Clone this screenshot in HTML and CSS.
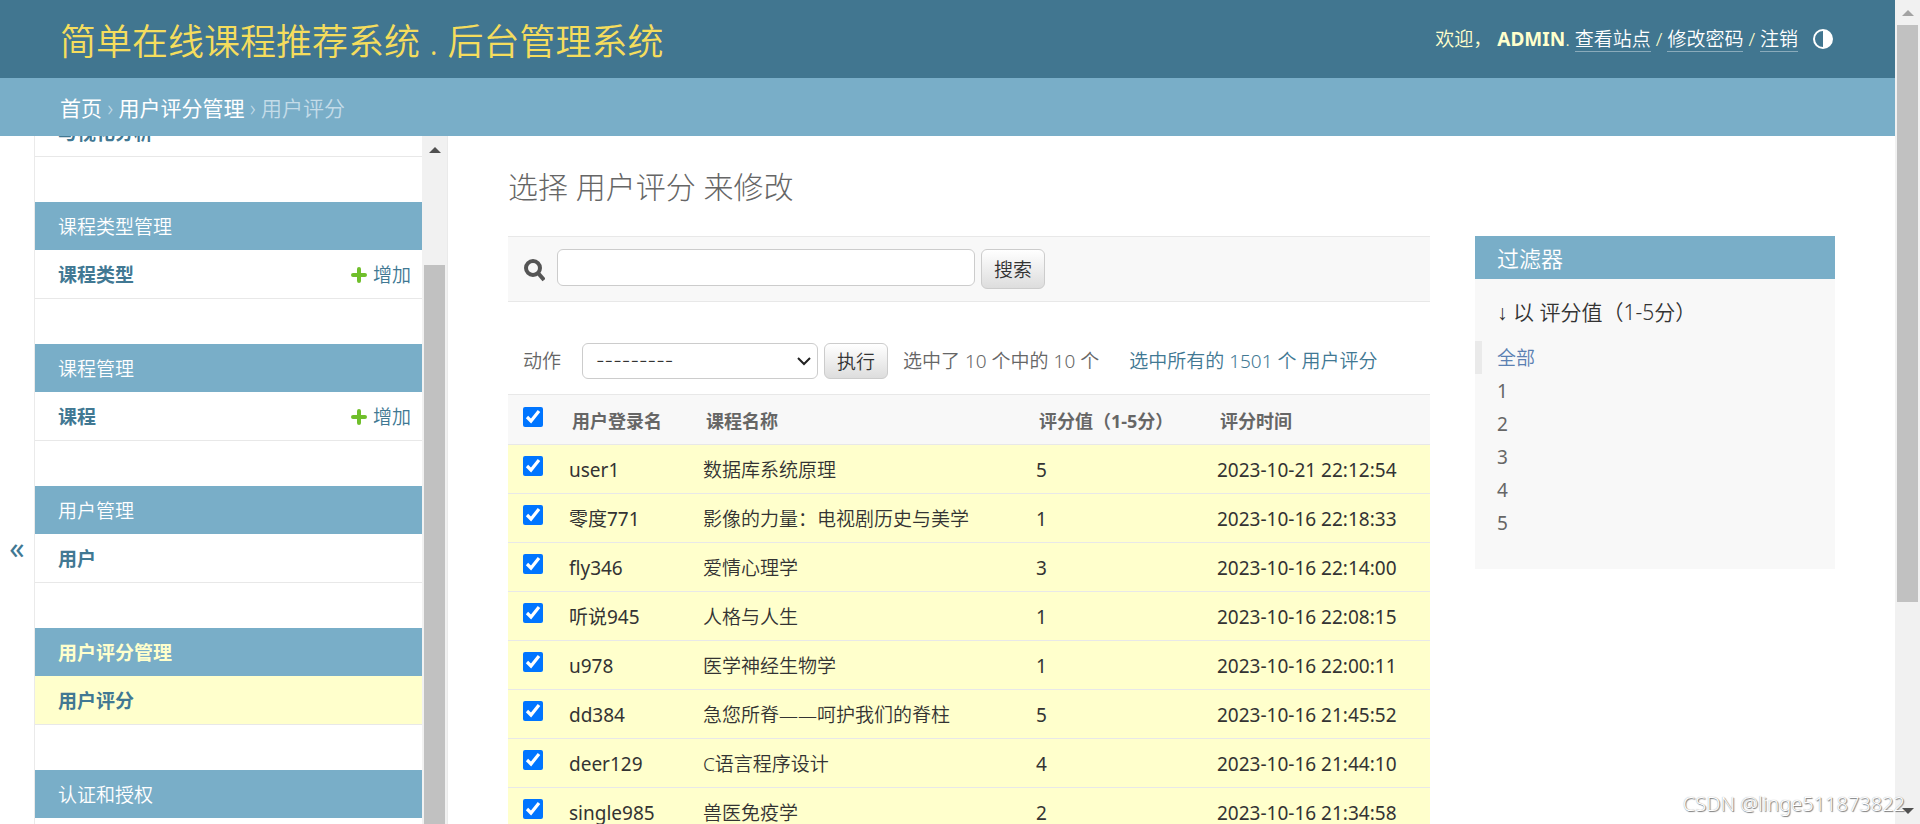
FILE: index.html
```html
<!DOCTYPE html>
<html lang="zh-CN">
<head>
<meta charset="utf-8">
<title>选择 用户评分 来修改</title>
<link rel="stylesheet" href="styles.css">
</head>
<body>
<div class="window">
  <div class="page">
    <header class="header">
      <h1 class="brand"><a href="#">简单在线课程推荐系统 . 后台管理系统</a></h1>
      <div class="user-tools">
        <span>欢迎，</span>
        <span><strong>ADMIN</strong>.</span>
        <a href="#">查看站点</a> <span>/</span>
        <a href="#">修改密码</a> <span>/</span>
        <a href="#">注销</a>
        <button class="theme-toggle" type="button" aria-label="切换主题">
          <svg viewBox="0 0 20 20" width="20" height="20"><circle cx="10" cy="10" r="9" fill="none" stroke="#fff" stroke-width="2"/><path d="M10 1a9 9 0 0 1 0 18z" fill="#fff"/></svg>
        </button>
      </div>
    </header>
    <nav class="breadcrumbs"><a href="#">首页</a> › <a href="#">用户评分管理</a> › 用户评分</nav>
    <div class="main">
      <button class="nav-toggle" type="button" aria-label="切换导航">«</button>
      <aside class="sidebar">
        <div class="modules">
          <section class="module">
            <div class="model"><a class="model-name" href="#">与视化分析</a></div>
          </section>
          <section class="module">
            <h2 class="caption"><a href="#">课程类型管理</a></h2>
            <div class="model"><a class="model-name" href="#">课程类型</a><a class="add" href="#"><svg viewBox="0 0 16 16" width="16" height="16"><path d="M8 2v12M2 8h12" stroke="#70bf2b" stroke-width="4" stroke-linecap="round"/></svg>增加</a></div>
          </section>
          <section class="module">
            <h2 class="caption"><a href="#">课程管理</a></h2>
            <div class="model"><a class="model-name" href="#">课程</a><a class="add" href="#"><svg viewBox="0 0 16 16" width="16" height="16"><path d="M8 2v12M2 8h12" stroke="#70bf2b" stroke-width="4" stroke-linecap="round"/></svg>增加</a></div>
          </section>
          <section class="module">
            <h2 class="caption"><a href="#">用户管理</a></h2>
            <div class="model"><a class="model-name" href="#">用户</a></div>
          </section>
          <section class="module current">
            <h2 class="caption"><a href="#">用户评分管理</a></h2>
            <div class="model"><a class="model-name" href="#">用户评分</a></div>
          </section>
          <section class="module">
            <h2 class="caption"><a href="#">认证和授权</a></h2>
            <div class="model"></div>
          </section>
        </div>
        <div class="scrollbar side-scroll" aria-hidden="true"><span class="arrow up"></span><span class="thumb"></span></div>
      </aside>
      <main class="content">
        <h1 class="title">选择 用户评分 来修改</h1>
        <div class="changelist">
          <div class="results">
            <form class="toolbar">
              <label class="search-label" for="q" aria-label="搜索"><svg viewBox="0 0 22 24" width="22" height="24" fill="none" stroke="#555"><circle cx="10" cy="9" r="7" stroke-width="4"/><path d="M15 14l6 7" stroke-width="4"/></svg></label>
              <input class="search" id="q" type="text">
              <button class="button" type="button">搜索</button>
            </form>
            <div class="actions">
              <label class="action-label" for="action">动作</label>
              <div class="select-wrap">
                <select class="action" id="action"><option>---------</option></select>
                <svg class="chevron" viewBox="0 0 14 10" width="14" height="10"><path d="M1 2l6 6 6-6" fill="none" stroke="#222" stroke-width="2"/></svg>
              </div>
              <button class="button" type="button">执行</button>
              <span class="counter">选中了 10 个中的 10 个</span>
              <a class="all" href="#">选中所有的 1501 个 用户评分</a>
            </div>
            <table class="list">
              <colgroup><col class="c-check"><col class="c-user"><col class="c-course"><col class="c-score"><col></colgroup>
              <thead><tr><th><input type="checkbox" checked aria-label="全选"></th><th>用户登录名</th><th>课程名称</th><th>评分值（1-5分）</th><th>评分时间</th></tr></thead>
              <tbody>
                <tr><td><input type="checkbox" checked aria-label="user1"></td><td>user1</td><td class="course">数据库系统原理</td><td>5</td><td>2023-10-21 22:12:54</td></tr>
                <tr><td><input type="checkbox" checked aria-label="零度771"></td><td>零度771</td><td class="course">影像的力量：电视剧历史与美学</td><td>1</td><td>2023-10-16 22:18:33</td></tr>
                <tr><td><input type="checkbox" checked aria-label="fly346"></td><td>fly346</td><td class="course">爱情心理学</td><td>3</td><td>2023-10-16 22:14:00</td></tr>
                <tr><td><input type="checkbox" checked aria-label="听说945"></td><td>听说945</td><td class="course">人格与人生</td><td>1</td><td>2023-10-16 22:08:15</td></tr>
                <tr><td><input type="checkbox" checked aria-label="u978"></td><td>u978</td><td class="course">医学神经生物学</td><td>1</td><td>2023-10-16 22:00:11</td></tr>
                <tr><td><input type="checkbox" checked aria-label="dd384"></td><td>dd384</td><td class="course">急您所脊——呵护我们的脊柱</td><td>5</td><td>2023-10-16 21:45:52</td></tr>
                <tr><td><input type="checkbox" checked aria-label="deer129"></td><td>deer129</td><td class="course">C语言程序设计</td><td>4</td><td>2023-10-16 21:44:10</td></tr>
                <tr><td><input type="checkbox" checked aria-label="single985"></td><td>single985</td><td class="course">兽医免疫学</td><td>2</td><td>2023-10-16 21:34:58</td></tr>
              </tbody>
            </table>
          </div>
          <aside class="filter">
            <h2 class="filter-title">过滤器</h2>
            <h3 class="filter-by"><span class="down">↓</span> 以 评分值（1-5分）</h3>
            <ul class="filter-list">
              <li class="selected"><a href="#">全部</a></li>
              <li><a href="#">1</a></li>
              <li><a href="#">2</a></li>
              <li><a href="#">3</a></li>
              <li><a href="#">4</a></li>
              <li><a href="#">5</a></li>
            </ul>
          </aside>
        </div>
      </main>
    </div>
  </div>
  <div class="scrollbar page-scroll" aria-hidden="true"><span class="arrow up"></span><span class="thumb"></span><span class="arrow down-arrow"></span></div>
  <div class="watermark">CSDN @linge511873822</div>
</div>
</body>
</html>
```
FILE: styles.css
```css
* { box-sizing: border-box; }

body {
  margin: 0;
  background: #fff;
  color: #333;
  font: 350 19px/24px "Noto Sans", "Noto Sans CJK SC", sans-serif;
}

h1, h2, h3, ul { margin: 0; padding: 0; font-weight: 350; }
ul { list-style: none; }
a { color: #417893; text-decoration: none; }
svg { display: block; flex: none; }
button, input, select { font: inherit; color: inherit; margin: 0; }

.window { position: relative; display: flex; height: 100vh; overflow: hidden; }
.page { flex: 1; min-width: 0; display: flex; flex-direction: column; }

/* Header */
.header {
  flex: none;
  display: flex;
  align-items: center;
  justify-content: space-between;
  height: 78px;
  padding: 0 62px 0 60px;
  background: #417690;
  color: #ffc;
}
.brand { padding-top: 5px; font-size: 36px; line-height: 48px; font-weight: 350; }
.brand a { color: #f5dd5d; }
.user-tools { display: flex; align-items: center; gap: 5px; line-height: 24px; }
.user-tools a { color: #fff; border-bottom: 1px solid #8aabbb; }
.theme-toggle { margin-left: 10px; padding: 0; border: 0; background: none; }

.breadcrumbs {
  flex: none;
  height: 58px;
  padding: 2px 60px 0;
  background: #79aec8;
  color: #c4dce8;
  font-size: 21px;
  line-height: 56px;
}
.breadcrumbs a { color: #fff; font-weight: 400; }

/* Sidebar */
.main { flex: 1; min-height: 0; display: flex; }
.nav-toggle {
  width: 35px;
  padding: 136px 0 0;
  border: 0;
  border-right: 1px solid #eaeaea;
  background: #fff;
  color: #417893;
  font-size: 30px;
  font-weight: 400;
}
.sidebar { flex: none; display: flex; width: 413px; border-right: 1px solid #eaeaea; overflow: hidden; }
.modules { flex: 1; margin-top: -28px; }
.module { margin-bottom: 45px; }
.caption { height: 48px; padding: 2px 23px 0; background: #79aec8; font-size: 19px; line-height: 46px; }
.caption a { color: #fff; }
.model {
  display: flex;
  align-items: center;
  justify-content: space-between;
  height: 49px;
  padding: 2px 11px 0 23px;
  border-bottom: 1px solid #e8e8e8;
}
.model-name { font-weight: 700; }
.add { display: flex; align-items: center; gap: 6px; }
.current .caption a { color: #ffc; font-weight: 700; }
.current .model { background: #ffc; }

/* Scrollbars */
.scrollbar {
  flex: none;
  display: flex;
  flex-direction: column;
  align-items: center;
  width: 25px;
  background: #f1f1f1;
}
.thumb { width: 21px; background: #c1c1c1; }
.arrow { width: 0; height: 0; border: 6px solid transparent; border-top-width: 0; }
.up { border-bottom-color: #505050; }
.page-scroll .up { margin: 10px 0 9px; border-bottom-color: #a3a3a3; }
.page-scroll .thumb { height: 70%; }
.down-arrow { margin: auto 0 10px; border-width: 6px 6px 0; border-top-color: #505050; }
.side-scroll .up { margin: 11px 0 112px; }
.side-scroll .thumb { flex: 1; }

/* Content */
.content { flex: 1; min-width: 0; padding: 29px 60px 0; }
.title { margin-bottom: 27px; color: #666; font-size: 30px; line-height: 44px; font-weight: 300; }
.changelist { display: flex; align-items: flex-start; gap: 45px; }
.results { flex: 1; min-width: 0; }
.toolbar {
  display: flex;
  align-items: flex-start;
  height: 66px;
  padding: 12px 15px;
  border: 1px solid #e8e8e8;
  border-width: 1px 0;
  background: #f8f8f8;
}
.search-label { padding: 10px 12px 0 0; }
.search { width: 418px; height: 37px; margin-right: 6px; padding: 0 8px; border: 1px solid #ccc; border-radius: 6px; background: #fff; }
.button {
  height: 40px;
  padding: 2px 12px 0;
  border: 1px solid #ccc;
  border-radius: 6px;
  background: linear-gradient(#fff, #ddd);
  color: #333;
}
.actions { display: flex; align-items: center; height: 92px; padding: 26px 15px 0; color: #666; }
.action-label { margin-right: 21px; }
.select-wrap { position: relative; margin-right: 6px; }
.action {
  display: block;
  width: 236px;
  height: 36px;
  padding: 0 13px;
  border: 1px solid #ccc;
  border-radius: 6px;
  background: #fff;
  color: #333;
  font-family: Inter, sans-serif;
  appearance: none;
}
.chevron { position: absolute; right: 7px; top: 13px; pointer-events: none; }
.actions .button { height: 36px; }
.counter { margin: 0 30px 0 15px; }

.list { width: 100%; border-collapse: collapse; table-layout: fixed; }
.c-check { width: 49px; }
.c-user { width: 134px; }
.c-course { width: 333px; }
.c-score { width: 181px; }
.list th, .list td { padding: 2px 12px 0; border-bottom: 1px solid #e8e8e8; text-align: left; white-space: nowrap; }
.list th { height: 50px; padding-left: 15px; border-top: 1px solid #e8e8e8; background: #f8f8f8; color: #666; font-size: 18px; }
.list td { height: 49px; background: #ffc; font-weight: 400; }
.list .course { font-weight: 350; }
.list td:first-child, .list th:first-child { padding: 0 0 6px 15px; }
.list input { display: block; width: 20px; height: 20px; accent-color: #0075ff; }

/* Filter */
.filter { flex: none; width: 360px; padding-bottom: 30px; background: #f8f8f8; }
.filter-title { padding: 2px 22px 0; background: #79aec8; color: #fff; font-size: 22px; line-height: 41px; }
.filter-by { padding: 19px 22px 14px; font-size: 21px; line-height: 28px; }
.down { font-family: "Liberation Sans", sans-serif; }
.filter-list li { height: 33px; padding-left: 22px; line-height: 34px; font-weight: 400; }
.filter-list a { color: #666; }
.filter-list .selected { padding-left: 15px; border-left: 7px solid #eaeaea; font-weight: 350; }
.filter-list .selected a { color: #5b80b2; }

.watermark {
  position: absolute;
  right: 15px;
  bottom: 8px;
  color: #fff;
  font-size: 20px;
  text-shadow: 1px 1px 1px #777, 0 0 1px #999;
}
```
